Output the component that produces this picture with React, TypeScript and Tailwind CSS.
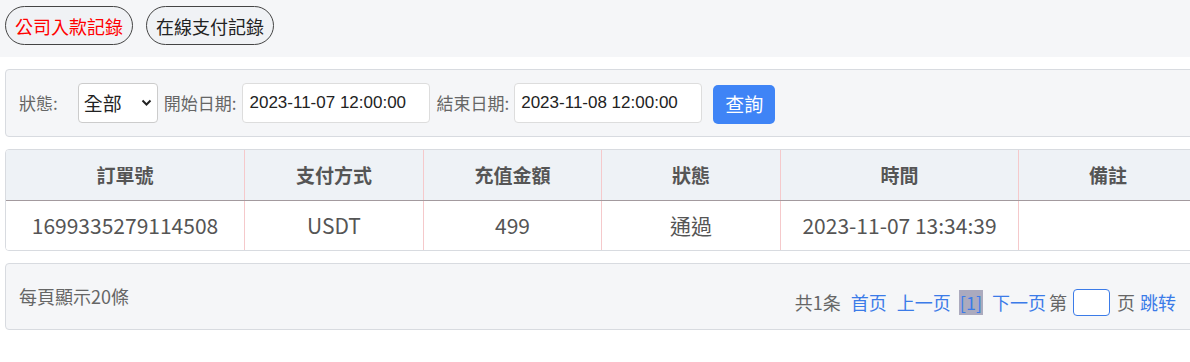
import React from "react";

const font = { fontFamily: '"Noto Sans CJK TC", "Noto Sans CJK SC", sans-serif' };
const arial = { fontFamily: '"Liberation Sans", Arial, sans-serif' };

export default function App() {
  const cols = [
    { h: "訂單號", v: "1699335279114508", w: "w-[238px]" },
    { h: "支付方式", v: "USDT", w: "w-[179px]" },
    { h: "充值金額", v: "499", w: "w-[178px]" },
    { h: "狀態", v: "通過", w: "w-[179px]" },
    { h: "時間", v: "2023-11-07 13:34:39", w: "w-[238px]" },
    { h: "備註", v: "", w: "w-[179px]" },
  ];
  return (
    <div className="w-[1190px] h-[362px] overflow-hidden bg-white text-[#555]" style={font}>
      <div className="w-[1200px]">
        {/* top bar */}
        <div className="h-[57px] bg-[#f5f6f8] flex items-start gap-[13px] pl-[5px] pt-[6px]">
          <div className="h-[39px] px-[9px] rounded-full border border-[#444] bg-[#f0f2f5] text-[18px] text-[#ff0000] flex items-center leading-none">
            公司入款記錄
          </div>
          <div className="h-[39px] px-[9px] rounded-full border border-[#444] bg-[#f0f2f5] text-[18px] text-[#222] flex items-center leading-none">
            在線支付記錄
          </div>
        </div>

        {/* filter */}
        <div className="ml-[5px] mt-[12px] w-[1195px] h-[68px] border border-[#d8dbe0] rounded-[4px] bg-[#f5f6f8] flex items-center pl-[13px]">
          <span className="text-[17px] text-[#666] mr-[20px]">狀態:</span>
          <div className="relative w-[80px] h-[40px] border border-[#ccc] rounded-[4px] bg-white flex items-center pl-[5px] text-[19px] text-[#222]">
            全部
            <svg className="absolute right-[5px] top-[15px]" width="11" height="8" viewBox="0 0 11 8">
              <path d="M1.5 1.5 L5.5 5.5 L9.5 1.5" fill="none" stroke="#222" strokeWidth="2" />
            </svg>
          </div>
          <span className="text-[17px] text-[#666] ml-[6px] mr-[6px]">開始日期:</span>
          <div className="w-[188px] h-[40px] border border-[#ddd] rounded-[4px] bg-white flex items-center pl-[6px] text-[17px] text-[#222]" style={arial}>
            2023-11-07 12:00:00
          </div>
          <span className="text-[17px] text-[#666] ml-[6px] mr-[5px]">結束日期:</span>
          <div className="w-[188px] h-[40px] border border-[#ddd] rounded-[4px] bg-white flex items-center pl-[6px] text-[17px] text-[#222]" style={arial}>
            2023-11-08 12:00:00
          </div>
          <div className="ml-[11px] w-[62px] h-[39px] rounded-[5px] bg-[#3f84f6] text-white text-[19px] flex items-center justify-center mt-[2px]">
            查詢
          </div>
        </div>

        {/* table */}
        <div className="ml-[5px] mt-[12px] w-[1195px] border border-[#d8dbe0] rounded-[4px] overflow-hidden">
          <div className="flex h-[51px] bg-[#eef2f6] border-b border-[#a39a9e]">
            {cols.map((c, i) => (
              <div key={i} className={`${c.w} shrink-0 flex items-center justify-center text-[19px] font-bold text-[#555] ${i > 0 ? "border-l border-[#f5c9cb]" : ""}`}>
                {c.h}
              </div>
            ))}
          </div>
          <div className="flex h-[49px] bg-white">
            {cols.map((c, i) => (
              <div key={i} className={`${c.w} shrink-0 flex items-center justify-center text-[21px] text-[#555] ${i > 0 ? "border-l border-[#f5c9cb]" : ""}`}>
                {c.v}
              </div>
            ))}
          </div>
        </div>

        {/* pagination */}
        <div className="ml-[5px] mt-[12px] w-[1195px] h-[67px] border border-[#d8dbe0] rounded-[4px] bg-[#f5f6f8] flex items-center justify-between pl-[13px] pr-[23px] text-[18px]">
          <span className="text-[#666]">每頁顯示20條</span>
          <div className="flex items-center mt-[12px] text-[#666]">
            <span>共1条</span>
            <span className="ml-[10px] text-[#3b7be8]">首页</span>
            <span className="ml-[10px] text-[#3b7be8]">上一页</span>
            <span className="ml-[8px] bg-[#abaabe] text-[#3b7be8] px-[1px] h-[25px] flex items-center">[1]</span>
            <span className="ml-[9px] text-[#3b7be8]">下一页</span>
            <span className="ml-[3px]">第</span>
            <span className="ml-[6px] w-[37px] h-[27px] border border-[#3b7be8] rounded-[4px] bg-white"></span>
            <span className="ml-[7px]">页</span>
            <span className="ml-[5px] text-[#3b7be8]">跳转</span>
          </div>
        </div>
      </div>
    </div>
  );
}
